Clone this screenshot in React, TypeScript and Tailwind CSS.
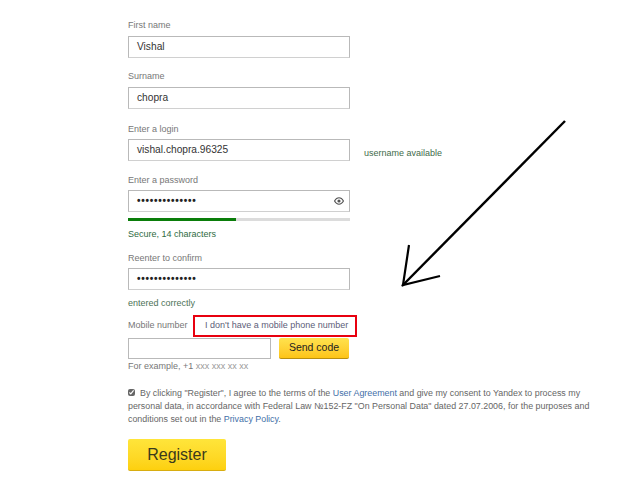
function Label({ children }: { children: React.ReactNode }) {
  return <div className="h-[14px] text-[9px] leading-[14px] text-[#777]">{children}</div>;
}

function Field({ value, password, eye }: { value: string; password?: boolean; eye?: boolean }) {
  return (
    <div className="flex h-[22px] w-[222px] items-center justify-between border border-[#b9b9b9] border-b-[#d0d0d0] bg-white pl-2 pr-[5px]">
      <span className={password ? "text-[10px] font-bold leading-none tracking-[0.75px] text-[#222]" : "text-[10.2px] text-[#333]"}>{value}</span>
      {eye && (
        <svg width="10" height="8" viewBox="0 0 10 8">
          <path d="M0.5 4C2 1.4 3.5 0.8 5 0.8S8 1.4 9.5 4C8 6.6 6.5 7.2 5 7.2S2 6.6 0.5 4Z" fill="none" stroke="#555" strokeWidth="1.1" />
          <circle cx="5" cy="4" r="1.6" fill="#555" />
        </svg>
      )}
    </div>
  );
}

export default function App() {
  return (
    <div className="relative h-[502px] w-[640px] overflow-hidden bg-white font-['Liberation_Sans',Arial,sans-serif]">
      <div className="flex flex-col pl-[128px] pt-[18px]">
        <Label>First name</Label>
        <div className="mt-[4px]"><Field value="Vishal" /></div>

        <div className="mt-[11px]"><Label>Surname</Label></div>
        <div className="mt-[4px]"><Field value="chopra" /></div>

        <div className="mt-[13px]"><Label>Enter a login</Label></div>
        <div className="mt-[3px] flex items-end">
          <Field value="vishal.chopra.96325" />
          <span className="mb-[2px] ml-[14px] text-[9px] leading-[12px] text-[#3f6b4a]">username available</span>
        </div>

        <div className="mt-[12px]"><Label>Enter a password</Label></div>
        <div className="mt-[3px]"><Field value="••••••••••••••" password eye /></div>
        <div className="mt-[6px] h-[3px] w-[222px] bg-[#dcdcdc]">
          <div className="h-full w-[108px] bg-[#0a7d0a]" />
        </div>
        <div className="mt-[6px] h-[14px] text-[9px] leading-[14px] text-[#2f6b3f]">Secure, 14 characters</div>

        <div className="mt-[10px]"><Label>Reenter to confirm</Label></div>
        <div className="mt-[3px]"><Field value="••••••••••••••" password /></div>
        <div className="mt-[6px] h-[14px] text-[9px] leading-[14px] text-[#4d7257]">entered correctly</div>

        <div className="mt-[5px] flex items-center">
          <span className="w-[65px] text-[9px] text-[#777]">Mobile number</span>
          <div className="flex h-[22px] w-[164px] items-center whitespace-nowrap border-2 border-[#e8000f] pl-[10px] text-[9px] text-[#5d5d78]">
            I don't have a mobile phone number
          </div>
        </div>
        <div className="mt-[1px] flex items-start">
          <div className="h-[21px] w-[143px] border border-[#b9b9b9] bg-white" />
          <button className="ml-2 h-[21px] w-[70px] rounded-[2px] border-b border-[#b98f10] bg-gradient-to-b from-[#ffe24d] to-[#fdc414] text-[10.5px] text-[#222]">
            Send code
          </button>
        </div>
        <div className="mt-[1px] h-[12px] text-[9px] leading-[12px] text-[#777]">
          For example, +1 <span className="text-[#999]">xxx xxx xx xx</span>
        </div>

        <div className="mt-[15px] h-[39px] w-[470px] text-[8.9px] leading-[13px] text-[#666]">
          <input type="checkbox" defaultChecked className="mr-[5px] h-[7px] w-[7px] align-[0px] accent-[#666]" />
          By clicking "Register", I agree to the terms of the <span className="text-[#3f6fa8]">User Agreement</span> and give my consent to Yandex to process my personal data, in accordance with Federal Law №152-FZ "On Personal Data" dated 27.07.2006, for the purposes and conditions set out in the <span className="text-[#3f6fa8]">Privacy Policy</span>.
        </div>

        <button className="mt-[13px] h-[32px] w-[98px] rounded-[2px] border-b border-[#d8ad10] bg-gradient-to-b from-[#ffe53a] to-[#fdd00d] text-[16px] text-[#3a3a1c]">
          Register
        </button>
      </div>

      {/* hand drawn arrow pasted over the form */}
      <svg className="absolute left-0 top-0" width="640" height="502" viewBox="0 0 640 502" fill="none">
        <path d="M565 121L402 286" stroke="#000" strokeWidth="2.4" />
        <path d="M409 245L403 285L440 276" stroke="#000" strokeWidth="2.2" />
      </svg>
    </div>
  );
}
